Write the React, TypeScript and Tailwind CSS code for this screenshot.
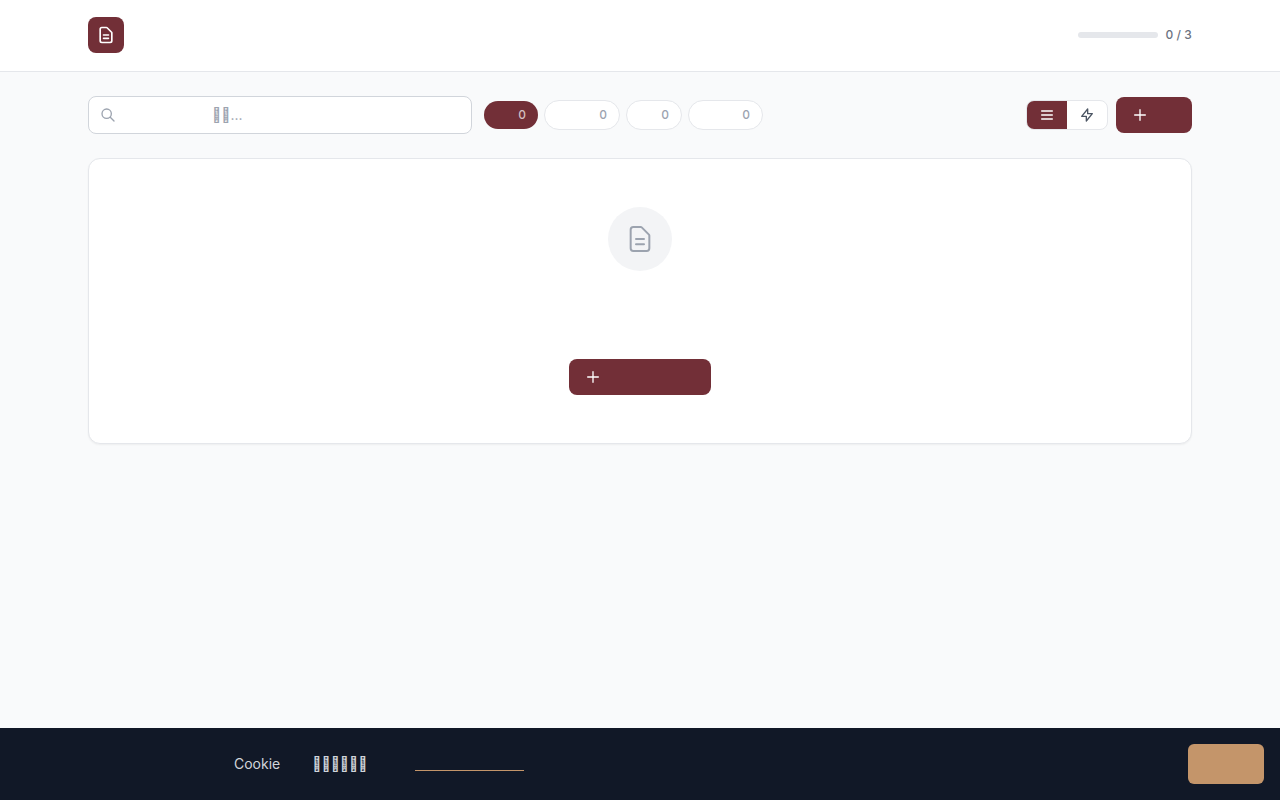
import { useState } from "react";

// code point without a glyph in Inter
const MISSING = "\uF8FE";

const FILTERS = [
  { id: "all", count: 0, width: "w-[54px]" },
  { id: "published", count: 0, width: "w-[76px]" },
  { id: "drafts", count: 0, width: "w-14" },
  { id: "archived", count: 0, width: "w-[75px]" },
];

interface IconProps {
  className: string;
  d: string;
  strokeWidth?: number;
}

function Icon({ className, d, strokeWidth = 2 }: IconProps) {
  return (
    <svg className={className} fill="none" viewBox="0 0 24 24" stroke="currentColor" aria-hidden="true">
      <path strokeLinecap="round" strokeLinejoin="round" strokeWidth={strokeWidth} d={d} />
    </svg>
  );
}

const DOCUMENT =
  "M9 12h6m-6 4h6m2 5H7a2 2 0 01-2-2V5a2 2 0 012-2h5.586a1 1 0 01.707.293l5.414 5.414a1 1 0 01.293.707V19a2 2 0 01-2 2z";
const SEARCH = "M21 21l-6-6m2-5a7 7 0 11-14 0 7 7 0 0114 0z";
const MENU = "M4 6h16M4 12h16M4 18h16";
const BOLT = "M13 10V3L4 14h7v7l9-11h-7z";
const PLUS = "M12 4v16m8-8H4";

export default function App() {
  const [filter, setFilter] = useState("all");
  const [view, setView] = useState("list");
  const [query, setQuery] = useState("");

  return (
    <div className="min-h-screen bg-[#f9fafb] font-['Inter',sans-serif] text-[#111827]">
      <header className="border-b border-[#e5e7eb] bg-white">
        <div className="mx-auto flex max-w-6xl items-center justify-between px-6 pt-[17px] pb-[18px]">
          <div className="flex size-9 items-center justify-center rounded-lg bg-[#722f37] text-white">
            <Icon className="size-5" d={DOCUMENT} />
          </div>
          <div className="flex items-center gap-2">
            <div className="h-1.5 w-20 rounded-full bg-[#e5e7eb]" />
            <span className="text-xs font-medium text-[#6b7280] tabular-nums">0 / 3</span>
          </div>
        </div>
      </header>

      <main className="mx-auto max-w-6xl px-6 py-6">
        <div className="flex items-center gap-3">
          <div className="relative w-96">
            <label htmlFor="search" aria-label="Search">
              <Icon
                className="absolute top-1/2 left-3 size-4 -translate-y-1/2 text-[#9ca3af]"
                d={SEARCH}
              />
            </label>
            <input
              id="search"
              type="text"
              value={query}
              onChange={(e) => setQuery(e.target.value)}
              placeholder={MISSING.repeat(2) + "..."}
              className="block h-[38px] w-full rounded-lg border border-[#d1d5db] bg-white pr-3 pb-0.5 pl-[123px] text-sm placeholder:text-[#9ca3af]"
            />
          </div>

          <div className="flex items-center gap-1.5">
            {FILTERS.map((f) => (
              <button
                key={f.id}
                onClick={() => setFilter(f.id)}
                className={`flex items-center justify-end rounded-full px-3 py-1.5 text-xs font-medium tabular-nums ${f.width} ${
                  filter === f.id
                    ? "bg-[#722f37] text-white/70"
                    : "border border-[#e5e7eb] bg-white text-[#9ca3af]"
                }`}
              >
                {f.count}
              </button>
            ))}
          </div>

          <div className="ml-auto flex items-center gap-2">
            <div className="flex overflow-hidden rounded-lg border border-[#e5e7eb] bg-white">
              <button
                onClick={() => setView("list")}
                aria-label="List view"
                aria-pressed={view === "list"}
                className={`px-3 py-1.5 ${view === "list" ? "bg-[#722f37] text-white" : "text-[#4b5563]"}`}
              >
                <Icon className="size-4" d={MENU} />
              </button>
              <button
                onClick={() => setView("quick")}
                aria-label="Quick view"
                aria-pressed={view === "quick"}
                className={`px-3 py-1.5 ${view === "quick" ? "bg-[#722f37] text-white" : "text-[#4b5563]"}`}
              >
                <Icon className="size-4" d={BOLT} />
              </button>
            </div>
            <button
              aria-label="Add"
              className="flex h-9 w-[76px] items-center rounded-lg bg-[#722f37] px-4 text-white"
            >
              <Icon className="size-4" d={PLUS} />
            </button>
          </div>
        </div>

        <section className="mt-6 flex flex-col items-center rounded-xl border border-[#e5e7eb] bg-white px-6 py-12 shadow-xs">
          <div className="flex size-16 items-center justify-center rounded-full bg-[#f3f4f6] text-[#9ca3af]">
            <Icon className="size-8" d={DOCUMENT} strokeWidth={1.5} />
          </div>
          <button
            aria-label="Add document"
            className="mt-[88px] flex h-9 w-[142px] items-center rounded-lg bg-[#722f37] px-4 text-white"
          >
            <Icon className="size-4" d={PLUS} />
          </button>
        </section>
      </main>

      <footer className="fixed inset-x-0 bottom-0 flex items-center justify-between bg-[#111827] p-4 text-sm text-[#d1d5db]">
        <p className="flex pl-[218px]">
          <span>Cookie</span>
          <span className="ml-8">{MISSING.repeat(6)}</span>
          <a
            href="#privacy"
            aria-label="Privacy policy"
            className="ml-12 h-[17px] w-[109px] border-b border-b-[#c4956a]"
          />
        </p>
        <button aria-label="Accept" className="h-10 w-[76px] rounded-md bg-[#c4956a]" />
      </footer>
    </div>
  );
}
